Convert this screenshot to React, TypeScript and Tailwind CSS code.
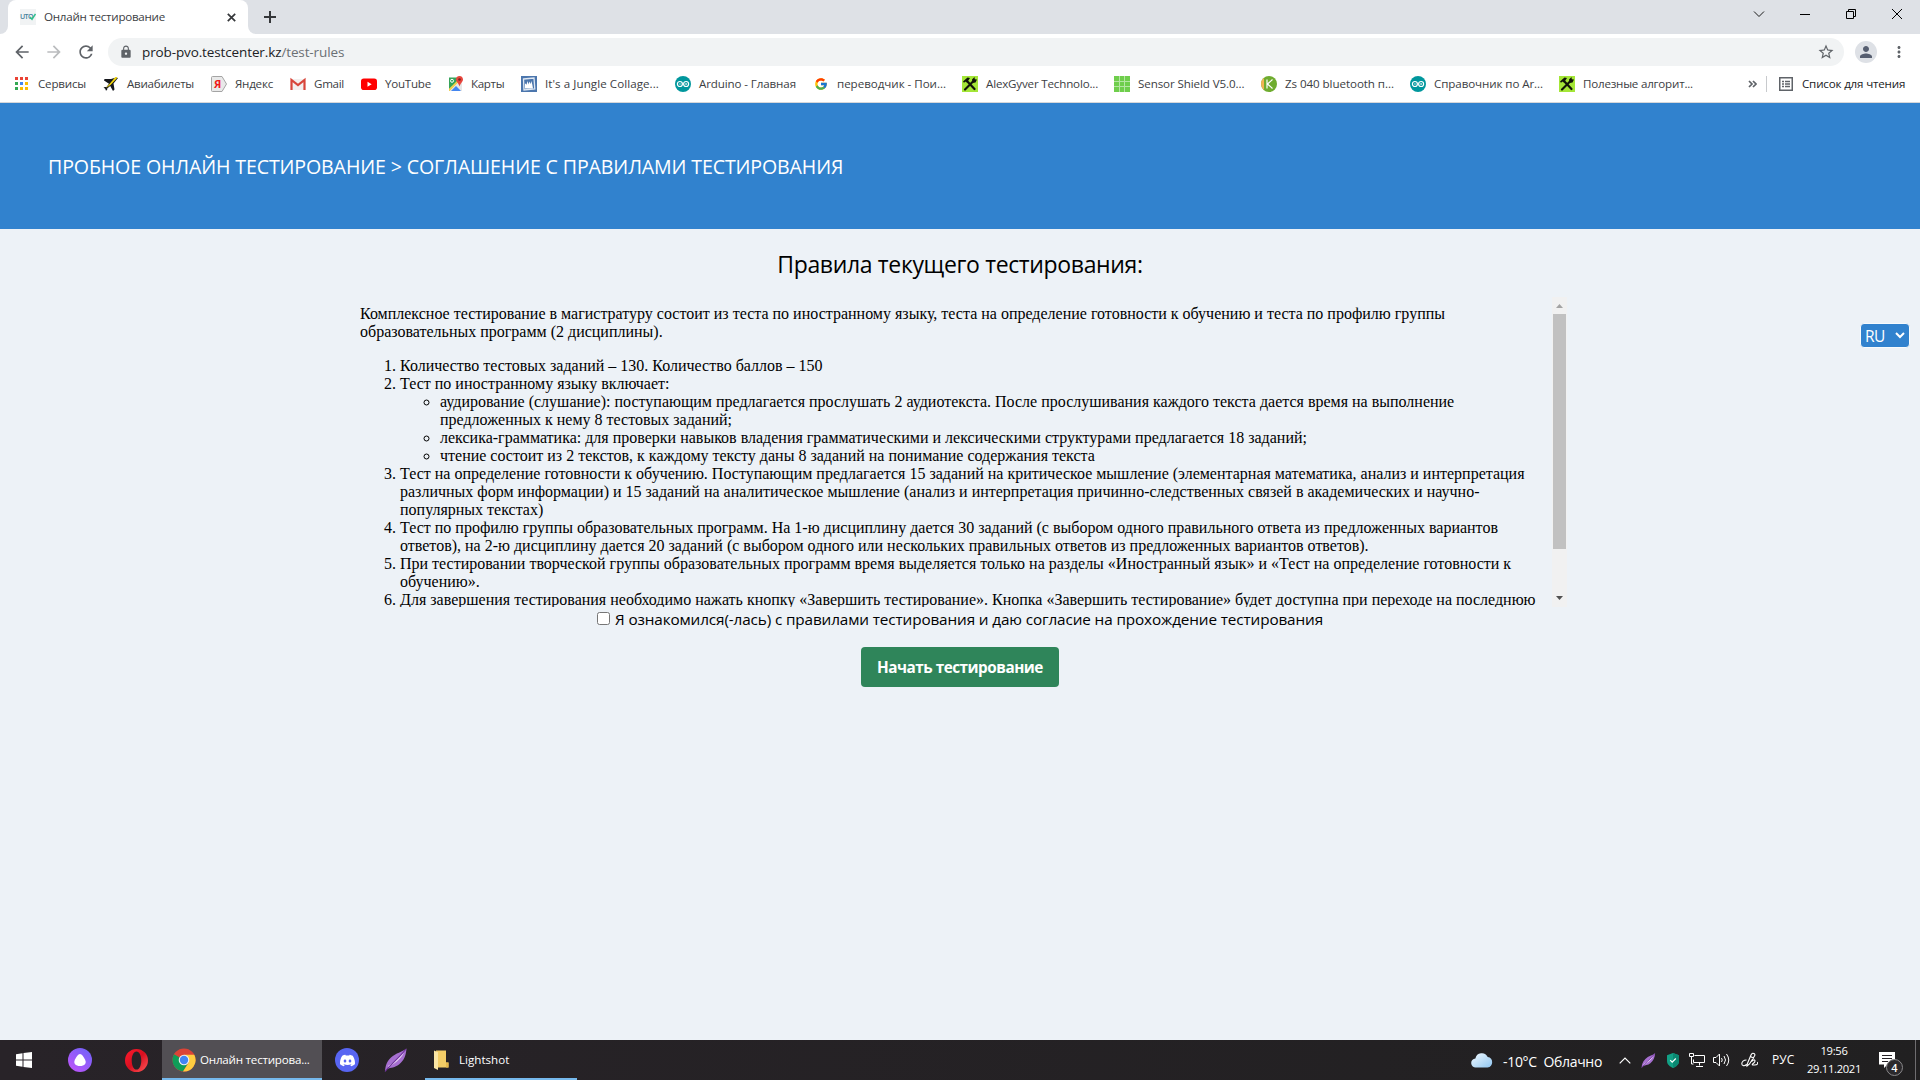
import type { ReactNode } from "react";
import {
  MdArrowBack,
  MdArrowForward,
  MdLock,
  MdMoreVert,
  MdPerson,
  MdRefresh,
  MdStarOutline,
} from "react-icons/md";
import { FcGoogle } from "react-icons/fc";
import { SiDiscord } from "react-icons/si";

function AppsIcon() {
  const colors = ["#ea4335", "#ea4335", "#ea4335", "#34a853", "#4285f4", "#fbbc04", "#34a853", "#fbbc04", "#fbbc04"];
  return (
    <svg width="16" height="16" viewBox="0 0 16 16">
      {colors.map((c, i) => (
        <rect key={i} x={2 + (i % 3) * 5} y={1 + Math.floor(i / 3) * 5} width="3" height="3" fill={c} />
      ))}
    </svg>
  );
}

function PlaneIcon() {
  return (
    <svg width="16" height="16" viewBox="0 0 16 16">
      <path d="M1.500 3h6.500l5-1.500L15 2 10.500 7.500l1 6-1.500 1.500-2.800-5-3 2.500v1.200L3 14.800l-.8-2L.5 11.500l1.500-.5h1.500L6 7.800 1 4.500z" fill="#15171c" />
      <path d="M3 12L12 1.500c2-1 2.500-.3 1.500 1.300L7.500 9z" fill="#f5d90c" />
    </svg>
  );
}

function YandexIcon() {
  return (
    <span className="relative block h-4 w-4">
      <svg width="16" height="16" viewBox="0 0 16 16">
        <path d="M1.500.5H11l4.500 7.500L11 15.500H1.500q-1 0-1-1v-13q0-1 1-1z" fill="#e9e9e9" stroke="#a4a4a4" />
      </svg>
      <span className="absolute left-[3px] top-0 font-['Open_Sans'] text-[11px] font-bold leading-4 text-[#f01818]">Я</span>
    </span>
  );
}

function GmailIcon() {
  return (
    <svg width="16" height="16" viewBox="0 0 16 16">
      <path d="M1 3h14v11H1z" fill="#f3efee" />
      <path d="M1.500 14V4L8 9l6.500-5v10" fill="none" stroke="#d8453a" strokeWidth="2.200" />
    </svg>
  );
}

function YouTubeIcon() {
  return (
    <svg width="16" height="16" viewBox="0 0 16 16">
      <rect x="0" y="2.500" width="16" height="11.500" rx="2.800" fill="#f00" />
      <path d="M6.500 5.800v5l4.200-2.500z" fill="#fff" />
    </svg>
  );
}

function MapsIcon() {
  return (
    <svg width="16" height="16" viewBox="0 0 16 16">
      <path d="M1 1.500h12V15H1z" fill="#35a35a" />
      <path d="M1 15L13 3l1 1v11z" fill="#e6e6e6" />
      <path d="M3 15l5-5 5 5z" fill="#4386f0" />
      <path d="M1 12.800L10.500 3.500l1.200 1.200L1.500 15H1z" fill="#f9d14a" />
      <circle cx="4" cy="4.800" r="1.500" fill="none" stroke="#fff" />
      <path d="M11.500 0C9.300 0 8 1.600 8 3.500c0 2.500 2.500 3.200 3.500 7 1-3.800 3.500-4.500 3.500-7C15 1.600 13.700 0 11.500 0z" fill="#e8453c" />
      <circle cx="11.500" cy="3.500" r="1.300" fill="#7d221c" />
    </svg>
  );
}

function JungleIcon() {
  return (
    <svg width="16" height="16" viewBox="0 0 16 16">
      <path d="M0 0h16v16H0z" fill="#4b76ad" />
      <path d="M2.500 3l10.500-1 .8 11L3 14z" fill="#4b76ad" stroke="#dfe8f3" strokeWidth="1.300" />
      <path d="M4 12.500V8l1-.5L5.500 9l1-4 1 3.500.8-3L9.500 8l.8-3 1 3.500.7 4z" fill="#fff" />
    </svg>
  );
}

function ArduinoIcon() {
  return (
    <svg width="16" height="16" viewBox="0 0 16 16">
      <circle cx="8" cy="8" r="8" fill="#00979d" />
      <circle cx="4.900" cy="8" r="2.500" fill="none" stroke="#fff" strokeWidth="1.200" />
      <circle cx="11.100" cy="8" r="2.500" fill="none" stroke="#fff" strokeWidth="1.200" />
      <path d="M4 8h1.800M10.200 8H12M11.100 7.100v1.800" stroke="#fff" strokeWidth=".7" />
    </svg>
  );
}

function ToolsIcon() {
  return (
    <svg width="16" height="16" viewBox="0 0 16 16">
      <path d="M0 0h16v16H0z" fill="#a4e637" />
      <path d="M4.500 4.500l8 8.500" stroke="#101408" strokeWidth="2.200" strokeLinecap="round" />
      <path d="M3 13.500L11.500 5" stroke="#101408" strokeWidth="2.200" strokeLinecap="round" />
      <path d="M1 5.500L5.500 1.500 8 2 5 6.500 3.500 5.500 2 6.800z" fill="#101408" />
      <path d="M10 3.500L12.500 1l.3 2.200 2.200.4L13.500 6.500l-3 .4z" fill="#101408" />
    </svg>
  );
}

function GridIcon() {
  return (
    <svg width="16" height="16" viewBox="0 0 16 16">
      <path d="M0 0h16v16H0z" fill="#6fce4c" />
      <path d="M5.500 0v16M10.500 0v16M0 5.500h16M0 10.500h16" stroke="#b4e6a2" />
    </svg>
  );
}

function KIcon() {
  return (
    <svg width="16" height="16" viewBox="0 0 16 16">
      <circle cx="8" cy="8" r="8" fill="#6fac2f" />
      <path d="M3 1.800a8 8 0 0 0 0 12.400z" fill="#f2b354" />
      <path d="M6 3.500v9M11.500 3.500L6.500 8l5 4.500" fill="none" stroke="#fff" strokeWidth="1.200" />
    </svg>
  );
}

type Bookmark = { label: string; icon: ReactNode; box: string; track: string };

const bookmarks: Bookmark[] = [
  { label: "Сервисы", icon: <AppsIcon />, box: "w-[90px] gap-[9px]", track: "tracking-[-0.2px]" },
  { label: "Авиабилеты", icon: <PlaneIcon />, box: "w-[108px] gap-2", track: "tracking-[-0.26px]" },
  { label: "Яндекс", icon: <YandexIcon />, box: "w-[79px] gap-2", track: "tracking-[-0.24px]" },
  { label: "Gmail", icon: <GmailIcon />, box: "w-[71px] gap-2", track: "tracking-[-0.3px]" },
  { label: "YouTube", icon: <YouTubeIcon />, box: "w-[87px] gap-2", track: "tracking-[-0.24px]" },
  { label: "Карты", icon: <MapsIcon />, box: "w-[73px] gap-[7px]", track: "tracking-[-0.35px]" },
  { label: "It's a Jungle Collage...", icon: <JungleIcon />, box: "w-[154px] gap-2", track: "tracking-[0.06px]" },
  { label: "Arduino - Главная", icon: <ArduinoIcon />, box: "w-[138px] gap-2", track: "tracking-[-0.12px]" },
  { label: "переводчик - Пои...", icon: <FcGoogle size={14} className="m-px" />, box: "w-[149px] gap-2", track: "tracking-[-0.04px]" },
  { label: "AlexGyver Technolo...", icon: <ToolsIcon />, box: "w-[152px] gap-2", track: "tracking-[-0.18px]" },
  { label: "Sensor Shield V5.0...", icon: <GridIcon />, box: "w-[147px] gap-2", track: "tracking-[-0.1px]" },
  { label: "Zs 040 bluetooth п...", icon: <KIcon />, box: "w-[149px] gap-2", track: "tracking-[-0.07px]" },
  { label: "Справочник по Ar...", icon: <ArduinoIcon />, box: "w-[149px] gap-2", track: "tracking-[-0.1px]" },
  { label: "Полезные алгорит...", icon: <ToolsIcon />, box: "w-[150px] gap-2", track: "tracking-[-0.22px]" },
];

function TabStrip() {
  return (
    <div className="flex h-[34px] bg-[#dee1e6]">
      <div className="flex w-2 items-end bg-white">
        <div className="h-full w-full rounded-br-lg bg-[#dee1e6]" />
      </div>
      <div className="w-[240px] bg-[#dee1e6]">
        <div className="flex h-full items-center rounded-t-lg bg-white pl-3 pr-[12px]">
          <span className="relative flex h-4 w-4 items-center bg-[#f1f3f4] font-['Open_Sans'] text-[7px] font-semibold tracking-[-0.6px] text-[#47819c]">
            UTO
            <svg className="absolute left-[9px] top-[4px]" width="7" height="8" viewBox="0 0 7 8">
              <path d="M1 4l2 2.200L6.500 1" fill="none" stroke="#2fc08c" strokeWidth="1.500" />
            </svg>
          </span>
          <span className="ml-2 whitespace-nowrap text-[11.6px] leading-4 tracking-[-0.26px] text-[#3c4043]">Онлайн тестирование</span>
          <svg className="ml-auto" width="9" height="9" viewBox="0 0 9 9">
            <path d="M.8.8l7.400 7.400M8.200.8L.8 8.200" stroke="#35373a" strokeWidth="1.700" />
          </svg>
        </div>
      </div>
      <div className="w-2 bg-white">
        <div className="h-full w-full rounded-bl-lg bg-[#dee1e6]" />
      </div>
      <svg className="ml-2 mt-[11px]" width="12" height="12" viewBox="0 0 12 12">
        <path d="M6 0v12M0 6h12" stroke="#35373a" strokeWidth="2" />
      </svg>
      <div className="ml-auto flex h-[28px] items-center text-[#1a1a1a]">
        <svg width="46" height="28" viewBox="0 0 46 28" fill="none" stroke="currentColor">
          <path d="M18 11.500l5 5 5-5" />
        </svg>
        <svg width="46" height="28" viewBox="0 0 46 28" fill="none" stroke="#000">
          <path d="M18 14.500h10" />
        </svg>
        <svg width="46" height="28" viewBox="0 0 46 28" fill="none" stroke="#000">
          <path d="M18.500 11.500h7v7h-7zM20.500 11.500v-2h7v7h-2" />
        </svg>
        <svg width="46" height="28" viewBox="0 0 46 28" fill="none" stroke="#000">
          <path d="M18 9l10 10M28 9L18 19" />
        </svg>
      </div>
    </div>
  );
}

function Toolbar() {
  return (
    <div className="flex h-[35px] items-center bg-white text-[#5f6368]">
      <MdArrowBack size={20} className="ml-3" />
      <MdArrowForward size={20} className="ml-3 text-[#babcbe]" />
      <MdRefresh size={20} className="ml-3" />
      <div className="ml-3 flex h-7 w-[1736px] items-center rounded-full bg-[#f1f3f4] pl-[11px] pr-[9px]">
        <MdLock size={14} />
        <span className="ml-[9px] whitespace-nowrap text-[13.5px] leading-5 tracking-[-0.12px] text-[#202124]">
          prob-pvo.testcenter.kz<span className="text-[#6b7075]">/test-rules</span>
        </span>
        <MdStarOutline size={18} className="ml-auto" />
      </div>
      <div className="ml-[11px] flex h-[22px] w-[22px] items-center justify-center rounded-full bg-[#dee1e6] text-[#565e70]">
        <MdPerson size={18} />
      </div>
      <MdMoreVert size={18} className="ml-[13px]" />
    </div>
  );
}

function BookmarksBar() {
  return (
    <div className="flex h-[34px] items-center border-b border-[#d5d7da] bg-white pb-[3px] pl-[13px] text-[11.6px] leading-4 text-[#3c4043]">
      {bookmarks.map((b, i) => (
        <div key={i} className={"flex shrink-0 items-center whitespace-nowrap " + b.box}>
          <span className="shrink-0">{b.icon}</span>
          <span className={b.track}>{b.label}</span>
        </div>
      ))}
      <svg className="ml-[39px] shrink-0" width="9" height="8" viewBox="0 0 9 8" fill="none" stroke="#5f6368" strokeWidth="1.700">
        <path d="M1 1l3 3-3 3M5 1l3 3-3 3" />
      </svg>
      <div className="ml-[9px] h-4 w-px bg-[#c8cacd]" />
      <svg className="ml-[12px] shrink-0" width="14" height="14" viewBox="0 0 14 14" fill="none" stroke="#5f6368">
        <rect x=".75" y=".75" width="12.500" height="12.500" strokeWidth="1.500" />
        <path d="M3 4.500h2M6 4.500h5M3 7h2M6 7h5M3 9.500h2M6 9.500h5" strokeWidth="1.300" />
      </svg>
      <span className="ml-[9px] whitespace-nowrap tracking-[-0.18px] text-[#202124]">Список для чтения</span>
    </div>
  );
}

function Rules() {
  return (
    <div className="flex h-[310px] w-[1207px] overflow-hidden">
      <div className="flex-1 overflow-hidden whitespace-nowrap pt-2 font-['Liberation_Serif',serif] text-[16px] leading-[18px] text-black">
        <p>
          Комплексное тестирование в магистратуру состоит из теста по иностранному языку, теста на определение готовности к обучению и теста по профилю группы
          <br />
          образовательных программ (2 дисциплины).
        </p>
        <ol className="mt-4 list-decimal pl-10">
          <li>Количество тестовых заданий – 130. Количество баллов – 150</li>
          <li>
            Тест по иностранному языку включает:
            <ul className="list-[circle] pl-10">
              <li>
                аудирование (слушание): поступающим предлагается прослушать 2 аудиотекста. После прослушивания каждого текста дается время на выполнение
                <br />
                предложенных к нему 8 тестовых заданий;
              </li>
              <li>лексика-грамматика: для проверки навыков владения грамматическими и лексическими структурами предлагается 18 заданий;</li>
              <li>чтение состоит из 2 текстов, к каждому тексту даны 8 заданий на понимание содержания текста</li>
            </ul>
          </li>
          <li>
            Тест на определение готовности к обучению. Поступающим предлагается 15 заданий на критическое мышление (элементарная математика, анализ и интерпретация
            <br />
            различных форм информации) и 15 заданий на аналитическое мышление (анализ и интерпретация причинно-следственных связей в академических и научно-
            <br />
            популярных текстах)
          </li>
          <li>
            Тест по профилю группы образовательных программ. На 1-ю дисциплину дается 30 заданий (с выбором одного правильного ответа из предложенных вариантов
            <br />
            ответов), на 2-ю дисциплину дается 20 заданий (с выбором одного или нескольких правильных ответов из предложенных вариантов ответов).
          </li>
          <li>
            При тестировании творческой группы образовательных программ время выделяется только на разделы «Иностранный язык» и «Тест на определение готовности к
            <br />
            обучению».
          </li>
          <li>Для завершения тестирования необходимо нажать кнопку «Завершить тестирование». Кнопка «Завершить тестирование» будет доступна при переходе на последнюю</li>
        </ol>
      </div>
      <div className="flex w-[15px] shrink-0 flex-col items-center bg-[#f1f1f1]">
        <svg width="15" height="17" viewBox="0 0 15 17">
          <path d="M4 11h7l-3.500-4z" fill="#a3a3a3" />
        </svg>
        <div className="h-[235px] w-[13px] bg-[#c1c1c1]" />
        <svg className="mt-auto" width="15" height="17" viewBox="0 0 15 17">
          <path d="M4 6h7l-3.500 4z" fill="#505050" />
        </svg>
      </div>
    </div>
  );
}

function Page() {
  return (
    <div className="flex h-[937px] flex-col bg-[#edf2f7] text-black">
      <header className="flex h-[126px] items-center bg-[#3182ce] pl-12 pt-[1px]">
        <h1 className="whitespace-nowrap text-[19.6px] leading-7 tracking-[-0.13px] text-white">
          ПРОБНОЕ ОНЛАЙН ТЕСТИРОВАНИЕ &gt; СОГЛАШЕНИЕ С ПРАВИЛАМИ ТЕСТИРОВАНИЯ
        </h1>
      </header>
      <main className="relative flex flex-col items-center">
        <h2 className="mt-[17px] h-9 whitespace-nowrap text-[23px] leading-9 tracking-[-0.35px]">Правила текущего тестирования:</h2>
        <div className="ml-[360px] mt-[15px] w-[1207px] self-start">
          <Rules />
        </div>
        <label className="flex h-6 items-center gap-[5px]">
          <span className="mb-[2px] h-[13px] w-[13px] rounded-[2.5px] border border-[#767676] bg-white" />
          <span className="whitespace-nowrap text-[15.3px] leading-6 tracking-[-0.125px]">
            Я ознакомился(-лась) с правилами тестирования и даю согласие на прохождение тестирования
          </span>
        </label>
        <button className="mt-4 h-10 w-[198px] whitespace-nowrap rounded bg-[#2f855a] text-[15.3px] font-bold tracking-[-0.49px] text-white">
          Начать тестирование
        </button>
        <div className="absolute right-[10px] top-[94px] flex h-[25px] w-[50px] items-center justify-between rounded border border-[#f8fbfd] bg-[#3182ce] pl-1 pr-1 text-[15.5px] leading-6 tracking-[-0.5px] text-white">
          RU
          <svg width="10" height="7" viewBox="0 0 10 7">
            <path d="M1 1l4 4 4-4" fill="none" stroke="#fff" strokeWidth="2" />
          </svg>
        </div>
      </main>
    </div>
  );
}

function Feather({ size }: { size: number }) {
  return (
    <svg width={size} height={size} viewBox="0 0 24 24">
      <path d="M1 23.500C1.500 19 2 14 7 9.500 12 5 18 4 22.500.5 22 7 20.500 12 15 16.500c-4 3.200-8.500 3-11.500 4.500z" fill="#a66fd0" />
      <path d="M4 18C9 15 15 10 20 4.500 17 11 10 16.500 4 19z" fill="#e6d3f3" />
      <path d="M1 23.500C6 17 14 11 22 1" fill="none" stroke="#6a2f96" strokeWidth="1.100" />
    </svg>
  );
}

function ChromeLogo() {
  return (
    <svg width="24" height="24" viewBox="0 0 24 24">
      <circle cx="12" cy="12" r="11.500" fill="#db4437" />
      <path d="M12 12L2 6.300A11.500 11.500 0 0 0 11 23.500l5.500-9z" fill="#0f9d58" />
      <path d="M12 6.800h10.300A11.500 11.500 0 0 1 11 23.500l5.700-9z" fill="#ffcd40" />
      <circle cx="12" cy="12" r="5.300" fill="#f1f1f1" />
      <circle cx="12" cy="12" r="4.200" fill="#4285f4" />
    </svg>
  );
}

function Taskbar() {
  return (
    <div className="flex h-10 bg-gradient-to-r from-[#282328] to-[#212021] text-white">
      <div className="flex h-10 w-[162px] items-center">
        <svg className="ml-4" width="16" height="16" viewBox="0 0 16 16" fill="#fff">
          <path d="M0 2.200l6.500-.9v6.200H0zM7.500 1.100L16 0v7.500H7.500zM0 8.500h6.500v6.200L0 13.800zM7.500 8.500H16V16l-8.500-1.100z" />
        </svg>
        <svg className="ml-9" width="24" height="24" viewBox="0 0 24 24">
          <defs>
            <linearGradient id="alice" x1="0.9" y1="0" x2="0.1" y2="1">
              <stop offset="0" stopColor="#6e62f8" />
              <stop offset="1" stopColor="#c054fa" />
            </linearGradient>
          </defs>
          <circle cx="12" cy="12" r="12" fill="url(#alice)" />
          <path d="M12 6c2 0 3.500 2.500 5 5.500 2 4-.5 6.500-5 6.500s-7-2.500-5-6.500C8.500 8.500 10 6 12 6z" fill="#fff" />
        </svg>
        <svg className="ml-[33px]" width="23" height="23" viewBox="0 0 24 24">
          <defs>
            <linearGradient id="opera" x1="0" y1="0" x2="1" y2="1">
              <stop offset="0" stopColor="#ff1b2d" />
              <stop offset="0.5" stopColor="#d80f20" />
              <stop offset="1" stopColor="#ff5a5a" />
            </linearGradient>
          </defs>
          <path fillRule="evenodd" d="M12 0a12 12 0 1 0 0 24 12 12 0 0 0 0-24zm0 2.500c3 0 5 4.200 5 9.500s-2 9.500-5 9.500S7 17.300 7 12s2-9.500 5-9.500z" fill="url(#opera)" />
        </svg>
      </div>
      <div className="flex h-10 w-[160px] items-center border-b-2 border-[#76b9ed] bg-[#524f54] pl-[10px] pt-[2px]">
        <ChromeLogo />
        <span className="ml-1 whitespace-nowrap text-[11.6px] tracking-[-0.22px]">Онлайн тестирова...</span>
      </div>
      <div className="flex h-10 w-[103px] items-center pl-[13px]">
        <span className="flex h-6 w-6 items-center justify-center rounded-full bg-[#5865f2]">
          <SiDiscord size={15} />
        </span>
        <span className="ml-[25px]">
          <Feather size={24} />
        </span>
      </div>
      <div className="flex h-10 w-[152px] items-center border-b-2 border-[#76b9ed] pl-[9px] pt-[2px]">
        <svg width="15" height="20" viewBox="0 0 15 20">
          <path d="M2 .5h10v12h2.500v5H3z" fill="#f3cd67" />
          <path d="M0 .5l4 1.800V20l-4-2z" fill="#fbe6a5" />
          <path d="M12 12.500h2.500v5H12z" fill="#e7b94d" />
        </svg>
        <span className="ml-[10px] text-[11.6px]">Lightshot</span>
      </div>
      <div className="ml-auto flex h-10 items-center">
        <svg width="22" height="16" viewBox="0 0 22 16">
          <defs>
            <linearGradient id="cloud" x1="0" y1="0" x2="1" y2="1">
              <stop offset="0" stopColor="#f2faff" />
              <stop offset="1" stopColor="#8fc5f0" />
            </linearGradient>
          </defs>
          <path d="M5 15.500a4.500 4.500 0 0 1-.6-9A6.500 6.500 0 0 1 16.700 5 5.300 5.300 0 0 1 16.500 15.500z" fill="url(#cloud)" />
        </svg>
        <span className="ml-[10px] flex w-[99px] justify-between whitespace-nowrap pt-[2px] text-[14px] tracking-[-0.33px]">
          <span className="tracking-[-0.3px]">-10°C</span>
          <span>Облачно</span>
        </span>
        <svg className="ml-[17px]" width="12" height="7" viewBox="0 0 12 7">
          <path d="M.7 6.300L6 1l5.300 5.300" fill="none" stroke="#fff" strokeWidth="1.200" />
        </svg>
        <span className="ml-[10px]">
          <Feather size={15} />
        </span>
        <svg className="ml-[11px]" width="12" height="15" viewBox="0 0 12 15">
          <path d="M6 0l6 2.200V8c0 3.500-3 5.700-6 7-3-1.300-6-3.500-6-7V2.200z" fill="#12a085" />
          <path d="M6 0l6 2.200V8c0 3.500-3 5.700-6 7z" fill="#0b8872" />
          <path d="M3.200 7.200l2 2 3.600-3.700" fill="none" stroke="#fff" strokeWidth="1.200" />
        </svg>
        <svg className="ml-[10px]" width="17" height="15" viewBox="0 0 17 15" fill="none" stroke="#fff">
          <path d="M5.500 2.500h10v7h-11v-3M10.500 9.500v3M7 13.500h7M.5.500h4v3h-4zM2.500 3.500v7.500h2" />
        </svg>
        <svg className="ml-[7px]" width="17" height="14" viewBox="0 0 17 14" fill="none" stroke="#fff">
          <path d="M.5 4.500H3l3.500-3.500v12L3 9.500H.5zM8.500 5q1.500 2 0 4M11 3q3 4 0 8M13.500 1q4.500 6 0 12" />
        </svg>
        <svg className="ml-[11px]" width="17" height="16" viewBox="0 0 17 16" fill="none" stroke="#fff" strokeWidth="1.100">
          <path d="M6 12.500L10 3q1-2.300 2.800-1.500T13.500 4L8.500 12l-2.500 2zM9.500 4.500l3.500 2M5.500 8C2.500 8 .8 9.800.8 11.800s2.700 2.700 4.700.7M10.500 9.500q2.500-2.500 3.300-1.200t-1.600 3.200 1.500 1.500 2.800-3" />
        </svg>
        <span className="ml-[14px] w-[23px] text-[12px]">РУС</span>
        <div className="ml-[12px] flex w-[54px] flex-col items-center whitespace-nowrap text-[11.2px] leading-[18px] tracking-[-0.3px]">
          <span>19:56</span>
          <span>29.11.2021</span>
        </div>
        <div className="relative ml-[18px] h-[17px] w-4">
          <svg width="16" height="16" viewBox="0 0 16 16">
            <path d="M0 0h16v12.500H8.500L5 16v-3.500H0z" fill="#fff" />
            <path d="M3 3.500h10M3 6.500h10M3 9.500h6" stroke="#252126" />
          </svg>
          <span className="absolute left-[7px] top-[7px] flex h-[17px] w-[17px] items-center justify-center rounded-full border border-[#8a898b] bg-[#2b292c] text-[11px] font-semibold leading-none">4</span>
        </div>
        <div className="ml-5 h-10 w-px bg-[#6f6d70]" />
        <div className="w-1" />
      </div>
    </div>
  );
}

export default function App() {
  return (
    <div className="h-[1080px] w-[1920px] overflow-hidden font-['Open_Sans','Noto_Sans',sans-serif]">
      <TabStrip />
      <Toolbar />
      <BookmarksBar />
      <Page />
      <Taskbar />
    </div>
  );
}
